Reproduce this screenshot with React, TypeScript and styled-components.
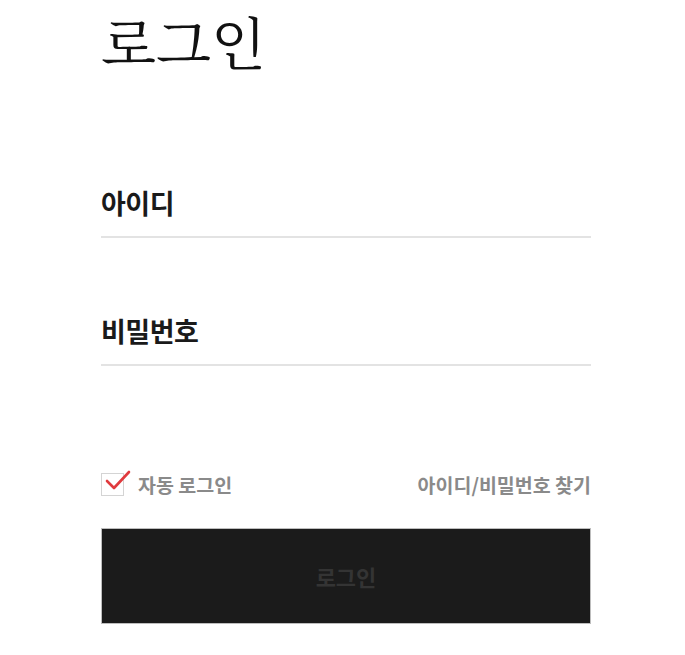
import styled, { createGlobalStyle } from 'styled-components'

const GlobalStyle = createGlobalStyle`
    html, body {
        margin: 0;
        padding: 0;
        background: #fff;
    }
    body {
        font-family: 'Noto Sans CJK KR', 'Noto Sans', sans-serif;
    }
`

const Page = styled.div`
    width: 490px;
    padding: 0 0 30px 101px;
`

const Title = styled.h1`
    margin: 0;
    font-family: 'Noto Serif CJK KR', 'Noto Sans CJK KR', serif;
    font-size: 57px;
    font-weight: 400;
    line-height: 80px;
    color: #111;
`

const Form = styled.form`
    display: flex;
    flex-direction: column;
    margin-top: 108px;
`

const Field = styled.div`
    display: flex;
    flex-direction: column;
    margin-bottom: 78px;
`

const Label = styled.label`
    font-size: 27px;
    font-weight: 700;
    line-height: 30px;
    letter-spacing: -0.5px;
    color: #1a1a1a;
`

const Input = styled.input`
    box-sizing: border-box;
    height: 20px;
    border: none;
    border-bottom: 2px solid #e3e3e3;
    outline: none;
    padding: 0;
    font-size: 18px;
`

const OptionsRow = styled.div`
    display: flex;
    align-items: center;
    justify-content: space-between;
    margin-top: 25px;
    height: 30px;
`

const CheckLabel = styled.label`
    display: flex;
    align-items: center;
    gap: 14px;
    font-size: 19.5px;
    font-weight: 700;
    color: #8a8a8a;
`

const Box = styled.span`
    position: relative;
    width: 21px;
    height: 21px;
    border: 1px solid #d4d4d4;
    background: #fff;
`

const Check = styled.svg`
    position: absolute;
    left: 2px;
    top: -5px;
    overflow: visible;
`

const FindLink = styled.a`
    font-size: 19.5px;
    font-weight: 700;
    color: #8a8a8a;
    text-decoration: none;
`

const SubmitButton = styled.button`
    margin-top: 29px;
    height: 96px;
    border: 1px solid #bdbdbd;
    background: #1b1b1b;
    color: #343434;
    font-family: inherit;
    font-size: 22px;
    font-weight: 700;
    cursor: pointer;
`

export default function App() {
    return (
        <>
            <GlobalStyle />
            <Page>
                <Title>로그인</Title>
                <Form onSubmit={(e) => e.preventDefault()}>
                    <Field>
                        <Label>아이디</Label>
                        <Input type="text" />
                    </Field>
                    <Field>
                        <Label>비밀번호</Label>
                        <Input type="password" />
                    </Field>
                    <OptionsRow>
                        <CheckLabel>
                            <Box>
                                <Check width="26" height="22" viewBox="0 0 26 22">
                                    <path d="M3 12 L10 19 L25 3" fill="none" stroke="#e03a3e" strokeWidth="2.6" strokeLinecap="round" strokeLinejoin="round" />
                                </Check>
                            </Box>
                            자동 로그인
                        </CheckLabel>
                        <FindLink href="#">아이디/비밀번호 찾기</FindLink>
                    </OptionsRow>
                    <SubmitButton type="submit">로그인</SubmitButton>
                </Form>
            </Page>
        </>
    )
}
